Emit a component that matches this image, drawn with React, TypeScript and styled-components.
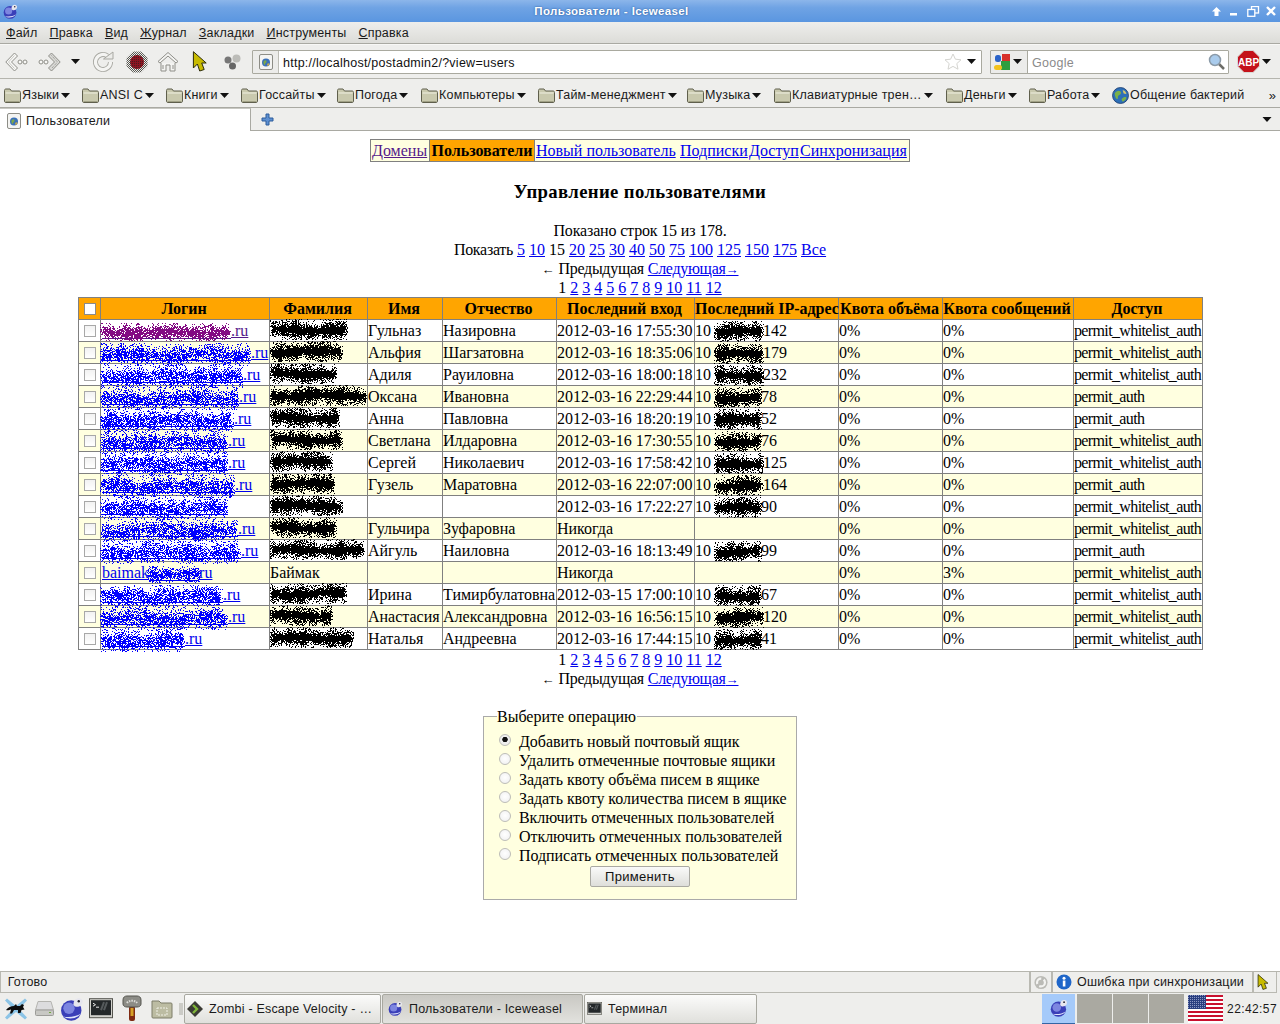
import React from "react";
import styled, { createGlobalStyle } from "styled-components";

const Global = createGlobalStyle`
  html, body { margin: 0; padding: 0; background: #fff; }
  #root { width: 1280px; height: 1024px; overflow: hidden; }
`;

const UI = `"Liberation Sans", Arial, sans-serif`;
const SERIF = `"Liberation Serif", "Times New Roman", serif`;

const Screen = styled.div`
  width: 1280px; height: 1024px; display: flex; flex-direction: column;
  font-family: ${UI}; font-size: 12.5px; color: #1a1a1a; background: #fff;
`;
const TitleBar = styled.div`
  height: 22px; flex: none; display: flex; align-items: center; position: relative;
  background: linear-gradient(#8cb6ea 0, #6fa3e4 35%, #5a96e0 100%);
  padding: 0 3px; box-sizing: border-box;
`;
const TitleText = styled.div`
  flex: 1; text-align: center; color: #fff; font-weight: bold; font-size: 11.5px;
  letter-spacing: .37px; padding-right: 7px; text-shadow: 0 0 2px #23508f;
`;
const WinButtons = styled.div`
  display: flex; align-items: center; gap: 6px; padding-right: 1px;
`;
const MenuBar = styled.div`
  height: 22px; flex: none; display: flex; align-items: center; gap: 12px; padding: 1px 6px 0;
  box-sizing: border-box; background: linear-gradient(#eeeeec, #dcdcd8);
  border-bottom: 1px solid #a9a9a2; letter-spacing: .19px;
`;
const MenuItem = styled.span``;
const NavBar = styled.div`
  height: 35px; flex: none; display: flex; align-items: center; box-sizing: border-box;
  background: #eeeeec; border-bottom: 1px solid #b5b5ae; border-top: 1px solid #f8f8f6;
`;
const ToolSlot = styled.div<{ $w: number }>`
  width: ${p => p.$w}px; flex: none; display: flex; align-items: center; justify-content: center;
`;
const UrlBox = styled.div`
  width: 730px; height: 24px; flex: none; display: flex; align-items: center; box-sizing: border-box;
  border: 1px solid #a9a99f; background: #fff; margin: 0 8px 0 4px; border-radius: 1px;
`;
const Identity = styled.div`
  width: 25px; height: 22px; display: flex; align-items: center; justify-content: center;
  background: #ececea; border-right: 1px solid #bdbdb6; flex: none;
`;
const UrlText = styled.div`
  flex: 1; padding: 2px 0 0 4px; letter-spacing: .25px; color: #111;
`;
const SearchBox = styled.div`
  width: 239px; height: 24px; flex: none; display: flex; align-items: center; box-sizing: border-box;
  border: 1px solid #a9a99f; background: #fff; margin-right: 8px; border-radius: 1px;
`;
const Engine = styled.div`
  width: 37px; height: 22px; display: flex; align-items: center; gap: 3px; padding-left: 3px; box-sizing: border-box;
  background: #ececea; border-right: 1px solid #a9a99f; flex: none;
`;
const SearchText = styled.div`
  flex: 1; padding: 2px 0 0 4px; color: #8a8a8a; letter-spacing: .3px;
`;
const BookBar = styled.div`
  height: 29px; flex: none; display: flex; align-items: center; padding: 4px 0 0 4px; box-sizing: border-box;
  background: #eeeeec; border-bottom: 1px solid #a9a9a2; letter-spacing: .2px;
`;
const BookItem = styled.div<{ $w: number }>`
  width: ${p => p.$w}px; flex: none; display: flex; align-items: center; gap: 1px; white-space: nowrap;
`;
const Chevron = styled.span`
  margin-left: auto; font-size: 13px; padding-right: 4px; letter-spacing: 0;
`;
const TabStrip = styled.div`
  height: 23px; flex: none; display: flex; align-items: stretch; box-sizing: border-box;
  background: #eeeeec; border-bottom: 1px solid #a9a9a2;
`;
const ActiveTab = styled.div`
  width: 251px; height: 23px; flex: none; box-sizing: border-box; display: flex; align-items: center; gap: 5px;
  padding: 1px 0 0 7px; background: #fff; border-right: 1px solid #a9a9a2; border-top: 1px solid #c8c8c2; letter-spacing: .22px;
`;
const TabSpacer = styled.div`
  flex: 1; display: flex; align-items: center; padding-left: 10px;
`;
const TabEnd = styled.div`
  width: 18px; display: flex; align-items: center;
`;
const Page = styled.div`
  flex: 1; padding-top: 8px; font-family: ${SERIF}; font-size: 16px; line-height: 19px;
  color: #000; text-align: center; background: #fff; min-height: 0;
  a { color: #0000ee; text-decoration: underline; }
`;
const SectionNav = styled.div`
  width: 540px; height: 23px; margin: 0 auto; box-sizing: border-box; display: flex; align-items: stretch;
  border: 1px solid #808080; background: #ffffe0; white-space: nowrap;
`;
const NavCell = styled.a<{ $w: number; $line?: boolean }>`
  width: ${p => p.$w}px; box-sizing: border-box; flex: none; line-height: 21px; padding-left: 1px; text-align: left;
  border-right: ${p => (p.$line ? "1px solid #808080" : "none")};
`;
const Visited = styled(NavCell)`
  && { color: #551a8b; }
`;
const CurrentCell = styled.b`
  width: 105px; box-sizing: border-box; flex: none; line-height: 21px; text-align: center;
  background: #ffa500; border-right: 1px solid #808080;
`;
const Heading = styled.h3`
  font-size: 18.72px; line-height: 21px; margin: 19px 0 19px; font-weight: bold; letter-spacing: .37px;
`;
const Line = styled.div`
  height: 19px; white-space: nowrap;
`;
const Tight = styled.span<{ $ls?: number }>`
  letter-spacing: ${p => p.$ls ?? -0.3}px;
`;
const SmallArrow = styled.span`
  font-size: 13px; letter-spacing: 0;
`;
const Users = styled.table`
  table-layout: fixed; width: 1124px; margin: 0 0 0 78px; border-collapse: collapse; text-align: left;
  th, td { border: 1px solid #808080; padding: 0 1px 0 0; white-space: nowrap; overflow: visible; }
  th { background: #ffa500; height: 22px; text-align: center; font-weight: bold; padding-right: 2px; }
  td { height: 21px; }
`;
const Row = styled.tr<{ $odd: boolean }>`
  background: ${p => (p.$odd ? "#ffffe0" : "#fff")};
`;
const HeadCell = styled.th<{ $w: number }>`
  width: ${p => p.$w}px; box-sizing: border-box;
`;
const BoxCell = styled.td`
  text-align: center;
`;
const LoginTd = styled.td`
  && { padding-left: 1px; }
`;
const Check = styled.span<{ $head?: boolean }>`
  display: block; width: 10px; height: 10px; margin: 0 auto 0 5px; border: 1px solid ${p => (p.$head ? "#8a8a8a" : "#a8a8a8")};
  background: ${p => (p.$head ? "#fff" : "linear-gradient(#f2f2f2,#fff)")};
`;
const Blotted = styled.span<{ $w: number }>`
  display: inline-block; position: relative; width: ${p => p.$w}px; height: 1px; vertical-align: baseline;
`;
const Underline = styled.span<{ $c: string }>`
  position: absolute; left: 0; right: 0; bottom: -3px; height: 1px; background: ${p => p.$c};
`;
const Blot = styled.svg<{ $l: number; $b: number }>`
  position: absolute; left: ${p => p.$l}px; bottom: ${p => p.$b}px; overflow: visible; shape-rendering: crispEdges;
`;
const SurnameCell = styled.td`
  position: relative;
`;
const AccessCell = styled.td`
  letter-spacing: -.63px;
`;
const VisitedLink = styled.a`
  && { color: #551a8b; }
`;
const Ops = styled.fieldset`
  width: 314px; min-inline-size: 0; box-sizing: border-box; margin: 19px auto 0; padding: 6px 10px 11px 15px; border: 1px solid #aaa;
  background: #ffffe0; text-align: left;
`;
const OpsLegend = styled.legend`
  margin-left: -2px; padding: 0 1px 0 0; line-height: 19px;
`;
const OpRow = styled.div`
  display: flex; align-items: center; gap: 7px; height: 19px; white-space: nowrap; letter-spacing: -.05px;
`;
const Radio = styled.span<{ $on?: boolean }>`
  position: relative; width: 10px; height: 10px; flex: none; border-radius: 50%; border: 1px solid #bdbdb8; margin: -3px 1px 0 0;
  background: radial-gradient(circle at 50% 45%, ${p => (p.$on ? "#111 0 2.4px, #eee 3px" : "#fff 0, #eee 100%")});
`;
const ApplyRow = styled.div`
  text-align: center; padding: 1px 5px 0 0; height: 22px;
`;
const ApplyButton = styled.button`
  width: 100px; height: 21px; font-family: ${UI}; font-size: 13px; padding: 0; color: #111; letter-spacing: .3px;
  border: 1px solid #aaa9a2; border-radius: 2px; background: linear-gradient(#fafaf9, #dededa);
`;
const StatusBar = styled.div`
  height: 22px; flex: none; display: flex; background: #eeeeec; border-top: 1px solid #b5b5ae; box-sizing: border-box; letter-spacing: .2px; white-space: nowrap;
`;
const StatusCell = styled.div<{ $w?: number }>`
  ${p => (p.$w ? `width: ${p.$w}px; flex: none;` : "flex: 1;")}
  box-sizing: border-box; display: flex; align-items: center; gap: 5px; padding: 0 3px; border: 1px solid #b9b9b2; border-top: 0;
`;
const Taskbar = styled.div`
  height: 31px; flex: none; display: flex; align-items: center; background: #eeeeec;
`;
const Launch = styled.div<{ $w: number }>`
  width: ${p => p.$w}px; flex: none; display: flex; align-items: center; justify-content: center;
`;
const Task = styled.div<{ $w: number; $on?: boolean; $pad: number }>`
  width: ${p => p.$w}px; height: 30px; flex: none; box-sizing: border-box; display: flex; align-items: center; gap: 6px;
  padding-left: ${p => p.$pad}px; margin-right: 1px; border: 1px solid #a8a8a0; border-radius: 2px; letter-spacing: .2px; white-space: nowrap; overflow: hidden;
  background: ${p => (p.$on ? "linear-gradient(#c9c8c3, #e2e2de)" : "linear-gradient(#fbfbfa, #e0e0dc)")};
`;
const Tray = styled.div`
  margin-left: auto; display: flex; align-items: center; height: 31px; gap: 1px;
`;
const Desk = styled.div<{ $on?: boolean }>`
  width: 35px; height: 29px; display: flex; align-items: center; justify-content: center; flex: none;
  background: ${p => (p.$on ? "#a5cafa" : "#aaa9a1")}; ${p => p.$on && "width: 33px; margin-right: 1px; border-bottom: 1px solid #3465a4;"}
`;
const Clock = styled.div`
  width: 56px; text-align: right; padding-right: 3px; box-sizing: border-box; letter-spacing: .4px; font-size: 12px;
`;

/* ---------- drawings ---------- */
const Arrow = ({ w = 9, c = "#111" }: { w?: number; c?: string }) => (
  <svg width={w} height={5} viewBox="0 0 9 5"><path d="M0 0h9L4.500 5z" fill={c} /></svg>
);
const Globe = ({ s = 14 }: { s?: number }) => (
  <svg width={s} height={s} viewBox="0 0 16 16">
    <circle cx="8" cy="8" r="7.500" fill="#2d6fb8" stroke="#1f3f70" strokeWidth=".8" />
    <path d="M2.500 6c2-3.500 6-3 6-.5s-3 1.500-3 4.500-2.500 1-3-4zM9 11.500c1.500-2.500 4.500-2.500 4.500-1.500s-2 4-4 3.500z" fill="#7bb04a" />
    <path d="M10 3c2 0 3.500 2 3.500 3.500L11 6z" fill="#d9c76a" />
  </svg>
);
const Weasel = ({ s = 16 }: { s?: number }) => (
  <svg width={s} height={s} viewBox="0 0 16 16">
    <circle cx="7.500" cy="9" r="6.800" fill="#3a3fb8" />
    <circle cx="6" cy="7.500" r="3.800" fill="#7d86e0" />
    <path d="M2 13C5 15 11 15 14 11 11 13 6 14 2 13z" fill="#dfe4fb" />
    <path d="M9 5c0-3 2-4.500 4.500-4 2 .5 2 3 .5 4.500S9.500 7 9 5z" fill="#e6e6ee" />
    <circle cx="12.500" cy="2.800" r=".8" fill="#223" />
  </svg>
);
const PageIcon = () => (
  <svg width={14} height={16} viewBox="0 0 14 16">
    <rect x=".5" y=".5" width="13" height="15" rx="1.500" fill="#f4f4f2" stroke="#8d8d86" />
    <circle cx="7" cy="8.500" r="4" fill="#3a70b8" />
    <path d="M4.500 7.500c1.500-2 3-1.500 3 0S6 9 6 10.500 4 10 4.500 7.500z" fill="#7da84a" />
    <path d="M8 10c1-1 2.500-1 2.500-.3S9.500 12 8.500 12z" fill="#c9a94a" />
  </svg>
);
const Folder = () => (
  <svg width={17} height={15} viewBox="0 0 17 15">
    <path d="M.5 2.500C.5 1.500 1 1 2 1h4l1.500 2H15c1 0 1.500.5 1.500 1.500V13c0 1-.5 1.500-1.500 1.500H2C1 14.500.5 14 .5 13z" fill="#c9c9ae" stroke="#5f5f4c" />
    <path d="M1.500 5h14" stroke="#f0f0e2" />
    <path d="M1.500 13.500h14" stroke="#a1a186" />
  </svg>
);
const Back = ({ flip }: { flip?: boolean }) => (
  <svg width={23} height={22} viewBox="0 0 23 22" style={flip ? { transform: "scaleX(-1)" } : undefined}>
    <path d="M9.500 2 .8 11l8.700 9 3-3L6.500 11l6-6z" fill={flip ? "#d9d9d6" : "#f8f8f6"} stroke="#8e8e88" />
    <path d="M9.500 4.500 3.500 11l6 6.500" fill="none" stroke={flip ? "#8e8e88" : "#c8c8c3"} strokeDasharray={flip ? "1 1" : undefined} />
    <circle cx="15" cy="11" r="2" fill="#f8f8f6" stroke="#8e8e88" />
    <circle cx="20" cy="11" r="2" fill="#f8f8f6" stroke="#8e8e88" />
  </svg>
);
const Reload = () => (
  <svg width={22} height={22} viewBox="0 0 22 22">
    <path d="M18.500 11a7.500 7.500 0 1 1-3-6" fill="none" stroke="#a7a7a1" strokeWidth="5" />
    <path d="M18.500 11a7.500 7.500 0 1 1-3-6" fill="none" stroke="#f4f4f2" strokeWidth="3.200" />
    <path d="M11.500 8h9.500V1z" fill="#ecece9" stroke="#a7a7a1" />
  </svg>
);
const Stop = () => (
  <svg width={22} height={22} viewBox="0 0 22 22">
    <defs>
      <pattern id="stopdots" width="2" height="2" patternUnits="userSpaceOnUse">
        <rect width="2" height="2" fill="#8c1420" /><rect width="1" height="1" fill="#4a1a20" />
      </pattern>
      <pattern id="stophalo" width="2" height="2" patternUnits="userSpaceOnUse">
        <rect width="2" height="2" fill="#eeeeec" /><rect width="1" height="1" fill="#55554f" /><rect x="1" y="1" width="1" height="1" fill="#55554f" />
      </pattern>
    </defs>
    <path d="M7 .5h8L21.500 7v8L15 21.500H7L.5 15V7z" fill="url(#stophalo)" />
    <circle cx="11" cy="11" r="7" fill="url(#stopdots)" />
  </svg>
);
const Home = () => (
  <svg width={22} height={21} viewBox="0 0 22 21" fill="none" stroke="#8e8e88">
    <path d="M1 10.500 11 1.500l10 9-2 1.500L11 5 3 12z" fill="#f4f4f2" />
    <path d="M4 12v8h5v-6h4v6h5v-8" fill="#f4f4f2" />
    <path d="M6 14v4M16 14v4" />
  </svg>
);
const Pointer = ({ s = 22 }: { s?: number }) => (
  <svg width={s * 0.7} height={s} viewBox="0 0 14 22">
    <path d="M.7.7v16.300l4-4 2.300 7 4.500-1.500-2.500-6.500h4.500z" fill="#c8bb00" stroke="#2c2c0a" />
  </svg>
);
const Molecule = () => (
  <svg width={17} height={16} viewBox="0 0 17 16">
    <circle cx="4" cy="6" r="3.500" fill="#777" />
    <circle cx="8.500" cy="12" r="3.500" fill="#666" />
    <circle cx="12.500" cy="4.500" r="4" fill="#bcbcb8" />
  </svg>
);
const Star = () => (
  <svg width={18} height={17} viewBox="0 0 18 17">
    <path d="M9 1l2.400 5.200 5.600.6-4.200 3.800 1.200 5.600L9 13.400 4 16.200l1.200-5.600L1 6.800l5.600-.6z" fill="#fff" stroke="#d4d4d0" />
  </svg>
);
const GoogleIcon = () => (
  <svg width={16} height={16} viewBox="0 0 16 16">
    <rect x="1" y="1" width="6" height="7" rx="2.500" fill="#2a63c8" />
    <rect x="8" y="0" width="8" height="8" fill="#d8302a" />
    <rect x="7" y="7" width="9" height="9" fill="#2e9e3f" />
    <rect x="0" y="11" width="8" height="5" rx="2.500" fill="#f2c21c" />
  </svg>
);
const Magnifier = () => (
  <svg width={17} height={17} viewBox="0 0 17 17">
    <path d="M10 10l6 6" stroke="#6d6d68" strokeWidth="2.500" />
    <circle cx="7" cy="7" r="5.500" fill="#a9cbec" stroke="#8b9aa8" strokeWidth="1.500" />
  </svg>
);
const Abp = () => (
  <svg width={23} height={23} viewBox="0 0 23 23">
    <path d="M7 .5h9L22.500 7v9L16 22.500H7L.5 16V7z" fill="#c4121a" stroke="#d8d8d4" />
    <text x="11.500" y="15.500" textAnchor="middle" fontFamily="Liberation Sans" fontWeight="bold" fontSize="10" fill="#fff">ABP</text>
  </svg>
);
const Plus = () => (
  <svg width={13} height={13} viewBox="0 0 13 13">
    <path d="M5 1h3v4h4v3H8v4H5V8H1V5h4z" fill="#5d8fd0" stroke="#2d5c9c" />
  </svg>
);
const Up = () => (
  <svg width={9} height={9} viewBox="0 0 9 9"><path d="M4.500 0 9 4.500H6.500V9h-4V4.500H0z" fill="#fff" /></svg>
);
const Min = () => (
  <svg width={14} height={9} viewBox="0 0 14 9"><rect x="3" y="6" width="7" height="2.500" fill="#fff" /></svg>
);
const Max = () => (
  <svg width={13} height={11} viewBox="0 0 13 11" fill="none" stroke="#fff"><rect x="4.500" y=".5" width="7" height="6.500" strokeWidth="1.300" /><rect x=".8" y="3.500" width="7" height="6.800" fill="#5a96e0" strokeWidth="1.300" /></svg>
);
const Close = () => (
  <svg width={10} height={10} viewBox="0 0 10 10"><path d="M1 1l8 8M9 1l-8 8" stroke="#fff" strokeWidth="2.400" /></svg>
);
const Sync = () => (
  <svg width={16} height={17} viewBox="0 0 16 17">
    <circle cx="8" cy="8.500" r="7.500" fill="#bbbbb6" />
    <circle cx="8" cy="8.500" r="4.500" fill="none" stroke="#f4f4f2" strokeWidth="2.500" strokeDasharray="9 3" />
  </svg>
);
const Info = () => (
  <svg width={16} height={16} viewBox="0 0 16 16">
    <circle cx="8" cy="8" r="7.500" fill="#1f66c9" />
    <rect x="6.800" y="6.500" width="2.600" height="6" fill="#fff" />
    <circle cx="8" cy="4.300" r="1.500" fill="#fff" />
  </svg>
);
const XLogo = () => (
  <svg width={24} height={24} viewBox="0 0 24 24">
    <path d="M3 1.500 12 9l9-7.500 2 2L15 12l8 8.500-2 2L12 15l-9 7.500-2-2L9 12 1 3.500z" fill="#8cc4e6" />
    <path d="M2 13c2-2.500 5-4 8-4l2-2 1 2h3l2-2 2 1-1 2 1.500 2.500-3 .5-1 3h-2.500v-3h-4l-2 3.500H6l1-4c-2 .5-3 1-5 .5z" fill="#0c0c0c" />
  </svg>
);
const Drive = () => (
  <svg width={19} height={15} viewBox="0 0 19 15">
    <path d="M3 .5h13l2.500 8.500H.5z" fill="#dcdcde" stroke="#b4b4b0" />
    <rect x=".5" y="9" width="18" height="5.500" rx="1" fill="#c8c8c4" stroke="#9c9c98" />
    <rect x="14" y="11" width="2" height="1" fill="#6fa83c" />
  </svg>
);
const Terminal = ({ s = 24 }: { s?: number }) => (
  <svg width={s} height={s * 0.85} viewBox="0 0 24 20">
    <rect x=".5" y=".5" width="23" height="19" fill="#d2d2cd" stroke="#55554f" />
    <rect x="2" y="2" width="20" height="15" fill="#24282a" />
    <path d="M4 5l2.500 1.500L4 8M7 9h3" stroke="#e8e8e8" fill="none" />
    <path d="M15 4 12 12M18 4 15 12" stroke="#555a5c" strokeWidth="2" />
  </svg>
);
const Gauge = () => (
  <svg width={20} height={27} viewBox="0 0 20 27">
    <rect x="7" y="11" width="6" height="15" rx="2" fill="#7f2a12" />
    <rect x="8.500" y="13" width="3" height="8" fill="#d6a126" />
    <path d="M1 9V5C1 2 3 1 5 1h10c2 0 4 1 4 4v4c0 2-2 3-4 3H5c-2 0-4-1-4-3z" fill="#8c8c86" stroke="#55554f" />
    <path d="M5 8c2-3 8-3 10 0" stroke="#dcdcd8" strokeWidth="2" strokeDasharray="1.500 1" fill="none" />
  </svg>
);
const CamFolder = () => (
  <svg width={22} height={20} viewBox="0 0 22 20">
    <path d="M1 2h7l2 2h10a1 1 0 0 1 1 1v13a1 1 0 0 1-1 1H2a1 1 0 0 1-1-1z" fill="#bcbca2" stroke="#7d7d68" />
    <rect x="6" y="9" width="10" height="7" fill="none" stroke="#f0f0e6" strokeDasharray="2 1" />
  </svg>
);
const Grip = () => (
  <svg width={4} height={12} viewBox="0 0 4 12"><path d="M0 1h4M0 3h4M0 5h4M0 7h4M0 9h4M0 11h4" stroke="#a8a8a0" /></svg>
);
const ZombiIcon = () => (
  <svg width={16} height={16} viewBox="0 0 16 16">
    <path d="M8 0 16 8 8 16 0 8z" fill="#3a3a34" />
    <path d="M6 4l4 4-4 4" fill="none" stroke="#7fb539" strokeWidth="2.400" />
  </svg>
);
const Flag = () => (
  <svg width={35} height={28} viewBox="0 0 35 28" shapeRendering="crispEdges">
    <rect width="35" height="28" fill="#fff" />
    {[0, 4, 8, 12, 16, 20, 24].map(y => <rect key={y} y={y} width="35" height="2" fill="#c8102e" />)}
    <defs>
      <pattern id="flagstars" width="2" height="2" patternUnits="userSpaceOnUse">
        <rect width="2" height="2" fill="#2a3f80" /><rect width="1" height="1" fill="#8c98c4" />
      </pattern>
    </defs>
    <rect width="18" height="14" fill="url(#flagstars)" />
  </svg>
);

/* ---------- redaction noise ---------- */
function noisePath(w: number, h: number, seed: number, density: number): string {
  let s = (seed * 2654435761) % 4294967296 || 12345;
  const rnd = () => { s ^= s << 13; s >>>= 0; s ^= s >>> 17; s ^= s << 5; s >>>= 0; return s / 4294967296; };
  const waves = [rnd() * 6, rnd() * 6, rnd() * 6];
  let d = "";
  for (let x = 0; x < w; x++) {
    const mid = h / 2 + Math.sin(x / 13 + waves[0]) * h * 0.05;
    const half = h * (0.36 + 0.07 * Math.sin(x / 6 + waves[1]) + 0.05 * Math.sin(x / 2.3 + waves[2]));
    const edge = Math.min(1, (x + 2) / 5, (w - x + 1) / 5);
    for (let y = 0; y < h; y++) {
      const t = (y - mid) / half;
      const p = density * edge * Math.exp(-t * t);
      if (rnd() < p) d += `M${x} ${y}h1v1h-1z`;
    }
  }
  return d;
}
const Noise = ({ w, h, seed, density, c, l, b }: { w: number; h: number; seed: number; density: number; c: string; l: number; b: number }) => (
  <Blot $l={l} $b={b} width={w} height={h} viewBox={`0 0 ${w} ${h}`}>
    <path d={noisePath(w, h, seed, density)} fill={c} />
  </Blot>
);

const SurnameBlot = styled.span`
  position: absolute; left: 0; top: 0; bottom: 0; width: 100%;
`;

/* ---------- data ---------- */
type U = { end: number; sur: number; name: string; mid: string; at: string; ip: string; ac: string; msg?: string };
const P = "permit_whitelist_auth";
const A = "permit_auth";
const users: U[] = [
  { end: 248, sur: 78, name: "Гульназ", mid: "Назировна", at: "2012-03-16 17:55:30", ip: "142", ac: P },
  { end: 268, sur: 73, name: "Альфия", mid: "Шагзатовна", at: "2012-03-16 18:35:06", ip: "179", ac: P },
  { end: 260, sur: 67, name: "Адиля", mid: "Рауиловна", at: "2012-03-16 18:00:18", ip: "232", ac: P },
  { end: 256, sur: 97, name: "Оксана", mid: "Ивановна", at: "2012-03-16 22:29:44", ip: "78", ac: A },
  { end: 251, sur: 70, name: "Анна", mid: "Павловна", at: "2012-03-16 18:20:19", ip: "52", ac: A },
  { end: 245, sur: 73, name: "Светлана", mid: "Илдаровна", at: "2012-03-16 17:30:55", ip: "76", ac: P },
  { end: 245, sur: 63, name: "Сергей", mid: "Николаевич", at: "2012-03-16 17:58:42", ip: "125", ac: P },
  { end: 252, sur: 65, name: "Гузель", mid: "Маратовна", at: "2012-03-16 22:07:00", ip: "164", ac: A },
  { end: 228, sur: 73, name: "", mid: "", at: "2012-03-16 17:22:27", ip: "90", ac: P },
  { end: 255, sur: 67, name: "Гульчира", mid: "Зуфаровна", at: "Никогда", ip: "", ac: P },
  { end: 258, sur: 95, name: "Айгуль", mid: "Наиловна", at: "2012-03-16 18:13:49", ip: "99", ac: A },
  { end: 212, sur: 0, name: "", mid: "", at: "Никогда", ip: "", ac: P, msg: "3%" },
  { end: 240, sur: 77, name: "Ирина", mid: "Тимирбулатовна", at: "2012-03-15 17:00:10", ip: "67", ac: P },
  { end: 245, sur: 63, name: "Анастасия", mid: "Александровна", at: "2012-03-16 16:56:15", ip: "120", ac: P },
  { end: 202, sur: 84, name: "Наталья", mid: "Андреевна", at: "2012-03-16 17:44:15", ip: "41", ac: P },
];
const cols: [string, number][] = [
  ["Логин", 169], ["Фамилия", 98], ["Имя", 75], ["Отчество", 114], ["Последний вход", 138],
  ["Последний IP-адрес", 144], ["Квота объёма", 104], ["Квота сообщений", 131], ["Доступ", 129],
];
const books: [string, number][] = [
  ["Языки", 78], ["ANSI C", 84], ["Книги", 75], ["Госсайты", 96], ["Погода", 84],
  ["Компьютеры", 117], ["Тайм-менеджмент", 149], ["Музыка", 87], ["Клавиатурные трен…", 172],
  ["Деньги", 83], ["Работа", 83],
];
const ops = [
  "Добавить новый почтовый ящик", "Удалить отмеченные почтовые ящики", "Задать квоту объёма писем в ящике",
  "Задать квоту количества писем в ящике", "Включить отмеченных пользователей", "Отключить отмеченных пользователей",
  "Подписать отмеченных пользователей",
];
const sizes = ["5", "10", "15", "20", "25", "30", "40", "50", "75", "100", "125", "150", "175", "Все"];
const pages = ["2", "3", "4", "5", "6", "7", "8", "9", "10", "11", "12"];

const Pager = () => (
  <Line>1 {pages.map((p, i) => <React.Fragment key={p}><a href="#">{p}</a>{i < pages.length - 1 ? " " : ""}</React.Fragment>)}</Line>
);
const PrevNext = () => (
  <Line><SmallArrow>←</SmallArrow> <Tight>Предыдущая</Tight> <a href="#"><Tight>Следующая</Tight><SmallArrow>→</SmallArrow></a></Line>
);

const LoginCell = ({ u, i }: { u: U; i: number }) => {
  const first = i === 0;
  const c = first ? "#551a8b" : "#0000ee";
  const blot = first ? "#830a83" : "#0000ff";
  if (i === 11) {
    return (
      <LoginTd><a href="#">baimak<Blotted $w={50}><Underline $c={c} /><Noise w={54} h={17} seed={120} density={.8} c={blot} l={-2} b={-5} /></Blotted>ru</a></LoginTd>
    );
  }
  const hasRu = i !== 8;
  const w = u.end - 102 - (hasRu ? 17 : 0);
  const Link = first ? VisitedLink : "a";
  return (
    <LoginTd>
      <Link href="#">
        <Blotted $w={w}>
          <Underline $c={c} />
          <Noise w={w + 2} h={first ? 18 : 23} seed={i + 7} density={first ? .92 : .74} c={blot} l={-2} b={first ? -5 : -8} />
        </Blotted>
        {hasRu ? ".ru" : ""}
      </Link>
    </LoginTd>
  );
};

export default function App() {
  return (
    <Screen>
      <Global />
      <TitleBar>
        <Weasel s={15} />
        <TitleText>Пользователи - Iceweasel</TitleText>
        <WinButtons><Up /><Min /><Max /><Close /></WinButtons>
      </TitleBar>
      <MenuBar>
        {["Файл", "Правка", "Вид", "Журнал", "Закладки", "Инструменты", "Справка"].map(m => (
          <MenuItem key={m}><u>{m[0]}</u>{m.slice(1)}</MenuItem>
        ))}
      </MenuBar>
      <NavBar>
        <ToolSlot $w={33}><Back /></ToolSlot>
        <ToolSlot $w={32}><Back flip /></ToolSlot>
        <ToolSlot $w={20}><Arrow /></ToolSlot>
        <ToolSlot $w={36}><Reload /></ToolSlot>
        <ToolSlot $w={31}><Stop /></ToolSlot>
        <ToolSlot $w={31}><Home /></ToolSlot>
        <ToolSlot $w={33}><Pointer /></ToolSlot>
        <ToolSlot $w={32}><Molecule /></ToolSlot>
        <UrlBox>
          <Identity><PageIcon /></Identity>
          <UrlText>http://localhost/postadmin2/?view=users</UrlText>
          <Star />
          <ToolSlot $w={19}><Arrow /></ToolSlot>
        </UrlBox>
        <SearchBox>
          <Engine><GoogleIcon /><Arrow /></Engine>
          <SearchText>Google</SearchText>
          <ToolSlot $w={24}><Magnifier /></ToolSlot>
        </SearchBox>
        <Abp />
        <ToolSlot $w={12}><Arrow /></ToolSlot>
      </NavBar>
      <BookBar>
        {books.map(([t, w]) => (
          <BookItem key={t} $w={w}><Folder /><span>{t}</span><ToolSlot $w={11}><Arrow /></ToolSlot></BookItem>
        ))}
        <BookItem $w={168}><Globe s={17} /><span>Общение бактерий</span><Chevron>»</Chevron></BookItem>
      </BookBar>
      <TabStrip>
        <ActiveTab><PageIcon /><span>Пользователи</span></ActiveTab>
        <TabSpacer><Plus /></TabSpacer>
        <TabEnd><Arrow w={10} /></TabEnd>
      </TabStrip>
      <Page>
        <SectionNav>
          <Visited href="#" $w={59} $line>Домены</Visited>
          <CurrentCell>Пользователи</CurrentCell>
          <NavCell href="#" $w={144}>Новый пользователь</NavCell>
          <NavCell href="#" $w={69}>Подписки</NavCell>
          <NavCell href="#" $w={51}>Доступ</NavCell>
          <NavCell href="#" $w={110}>Синхронизация</NavCell>
        </SectionNav>
        <Heading>Управление пользователями</Heading>
        <Line><Tight $ls={-0.16}>Показано строк 15 из 178.</Tight></Line>
        <Line><Tight $ls={-0.3}>Показать</Tight> {sizes.map((s, i) => (
          <React.Fragment key={s}>{s === "15" ? s : <a href="#">{s}</a>}{i < sizes.length - 1 ? " " : ""}</React.Fragment>
        ))}</Line>
        <PrevNext />
        <Pager />
        <Users>
          <thead>
            <tr>
              <HeadCell $w={22}><Check $head /></HeadCell>
              {cols.map(([t, w]) => <HeadCell key={t} $w={w}>{t}</HeadCell>)}
            </tr>
          </thead>
          <tbody>
            {users.map((u, i) => (
              <Row key={i} $odd={i % 2 === 1}>
                <BoxCell><Check /></BoxCell>
                <LoginCell u={u} i={i} />
                <SurnameCell>
                  {u.sur ? (
                    <SurnameBlot>
                      <Noise w={u.sur} h={21} seed={i + 40} density={1.05} c="#000" l={0} b={1} />
                    </SurnameBlot>
                  ) : "Баймак"}
                </SurnameCell>
                <td>{u.name}</td>
                <td>{u.mid}</td>
                <td>{u.at}</td>
                <td>
                  {u.ip && (
                    <>10<Blotted $w={u.ip.length === 3 ? 52 : 50}><Noise w={u.ip.length === 3 ? 50 : 48} h={21} seed={i + 90} density={1.05} c="#000" l={3} b={-6} /></Blotted>{u.ip}</>
                  )}
                </td>
                <td>0%</td>
                <td>{u.msg ?? "0%"}</td>
                <AccessCell>{u.ac}</AccessCell>
              </Row>
            ))}
          </tbody>
        </Users>
        <Pager />
        <PrevNext />
        <Ops>
          <OpsLegend>Выберите операцию</OpsLegend>
          {ops.map((o, i) => <OpRow key={o}><Radio $on={i === 0} /><span>{o}</span></OpRow>)}
          <ApplyRow><ApplyButton>Применить</ApplyButton></ApplyRow>
        </Ops>
      </Page>
      <StatusBar>
        <StatusCell>&nbsp;Готово</StatusCell>
        <StatusCell $w={22}><Sync /></StatusCell>
        <StatusCell $w={201}><Info /><span>Ошибка при синхронизации</span></StatusCell>
        <StatusCell $w={24}><Pointer s={17} /></StatusCell>
        <ToolSlot $w={3} />
      </StatusBar>
      <Taskbar>
        <Launch $w={31}><XLogo /></Launch>
        <Launch $w={27}><Drive /></Launch>
        <Launch $w={28}><Weasel s={24} /></Launch>
        <Launch $w={30}><Terminal /></Launch>
        <Launch $w={31}><Gauge /></Launch>
        <Launch $w={30}><CamFolder /></Launch>
        <Launch $w={7}><Grip /></Launch>
        <Task $w={197} $pad={2}><ZombiIcon /><span>Zombi - Escape Velocity - …</span></Task>
        <Task $w={201} $pad={5} $on><Weasel s={15} /><span>Пользователи - Iceweasel</span></Task>
        <Task $w={173} $pad={2}><Terminal s={15} /><span>Терминал</span></Task>
        <Tray>
          <Desk $on><Weasel s={18} /></Desk>
          <Desk /><Desk /><Desk />
          <ToolSlot $w={2} />
          <Flag />
          <Clock>22:42:57</Clock>
        </Tray>
      </Taskbar>
    </Screen>
  );
}
